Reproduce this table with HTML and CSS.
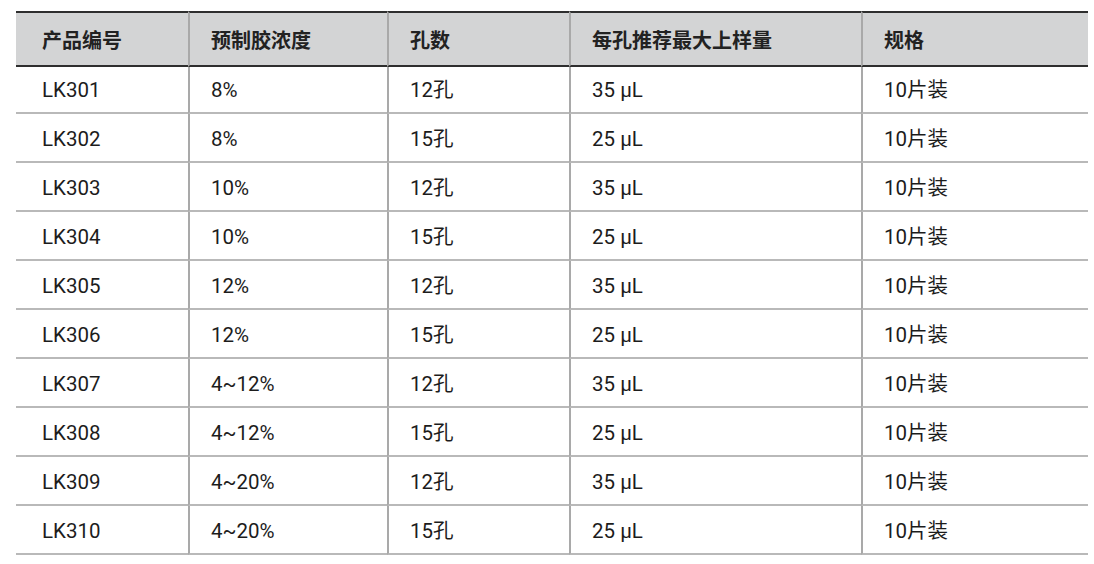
FILE: index.html
```html
<!DOCTYPE html>
<html lang="zh">
<head>
<meta charset="utf-8">
<title>产品规格</title>
<link rel="stylesheet" href="styles.css">
</head>
<body>
<table class="spec">
  <colgroup>
    <col class="c1"><col class="c2"><col class="c3"><col class="c4"><col class="c5">
  </colgroup>
  <thead>
    <tr><th>产品编号</th><th>预制胶浓度</th><th>孔数</th><th>每孔推荐最大上样量</th><th>规格</th></tr>
  </thead>
  <tbody>
    <tr><td>LK301</td><td>8%</td><td>12孔</td><td>35 µL</td><td>10片装</td></tr>
    <tr><td>LK302</td><td>8%</td><td>15孔</td><td>25 µL</td><td>10片装</td></tr>
    <tr><td>LK303</td><td>10%</td><td>12孔</td><td>35 µL</td><td>10片装</td></tr>
    <tr><td>LK304</td><td>10%</td><td>15孔</td><td>25 µL</td><td>10片装</td></tr>
    <tr><td>LK305</td><td>12%</td><td>12孔</td><td>35 µL</td><td>10片装</td></tr>
    <tr><td>LK306</td><td>12%</td><td>15孔</td><td>25 µL</td><td>10片装</td></tr>
    <tr><td>LK307</td><td>4~12%</td><td>12孔</td><td>35 µL</td><td>10片装</td></tr>
    <tr><td>LK308</td><td>4~12%</td><td>15孔</td><td>25 µL</td><td>10片装</td></tr>
    <tr><td>LK309</td><td>4~20%</td><td>12孔</td><td>35 µL</td><td>10片装</td></tr>
    <tr><td>LK310</td><td>4~20%</td><td>15孔</td><td>25 µL</td><td>10片装</td></tr>
  </tbody>
</table>
</body>
</html>
```
FILE: styles.css
```css
html, body {
  margin: 0;
  padding: 0;
  background: #ffffff;
}

body {
  padding: 11px 0 0 16px;
  font-family: "Roboto", "Noto Sans CJK SC", sans-serif;
  color: #1c1c1c;
}

.spec {
  width: 1072px;
  table-layout: fixed;
  border-collapse: separate;
  border-spacing: 0;
}

.c1 { width: 172px; }
.c2 { width: 199px; }
.c3 { width: 182px; }
.c4 { width: 292px; }
.c5 { width: 227px; }

.spec th {
  height: 50px;
  padding: 2px 0 0 23px;
  background: #d3d4d5;
  border-top: 2px solid #2e2e2e;
  border-bottom: 2px solid #2e2e2e;
  font-family: "Noto Sans CJK SC", sans-serif;
  font-size: 20px;
  font-weight: 700;
  color: #222222;
  text-align: left;
  vertical-align: middle;
  line-height: 1;
}

.spec td {
  height: 44px;
  padding: 3px 0 0 23px;
  border-bottom: 2px solid #b9b9b9;
  font-size: 20.5px;
  text-align: left;
  vertical-align: middle;
  line-height: 1;
}

.spec tbody tr:first-child td {
  height: 44px;
  padding-top: 1px;
}

.spec th + th,
.spec td + td {
  border-left: 2px solid #a9a9a9;
  padding-left: 21px;
}

.spec th:first-child,
.spec td:first-child {
  padding-left: 26px;
}
```
